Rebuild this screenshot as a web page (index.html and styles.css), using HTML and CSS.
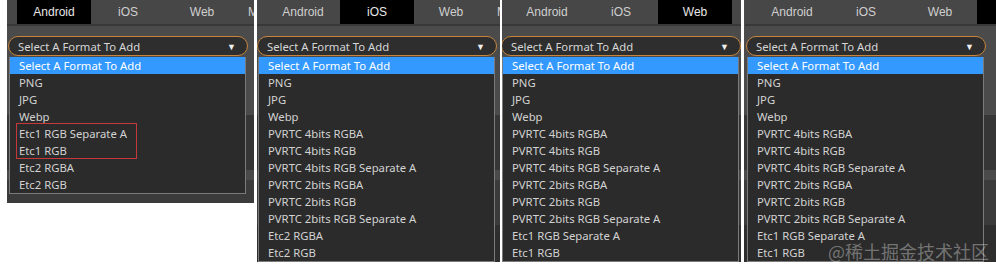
FILE: index.html
```html
<!DOCTYPE html>
<html lang="en">
<head>
    <meta charset="UTF-8">
    <title>Texture Formats</title>
    <link rel="stylesheet" href="styles.css">
</head>
<body>

    <div class="strip">

        <!-- Android -->
        <div class="panel p1">
            <div class="frame">
                <div class="tabs">
                    <span class="tab active">Android</span>
                    <span class="tab">iOS</span>
                    <span class="tab">Web</span>
                    <span class="tab more">M</span>
                </div>
                <div class="body">
                    <div class="select">Select A Format To Add<span class="arrow">▼</span></div>
                    <ul class="menu">
                        <li class="selected">Select A Format To Add</li>
                        <li>PNG</li>
                        <li>JPG</li>
                        <li>Webp</li>
                        <li>Etc1 RGB Separate A</li>
                        <li>Etc1 RGB</li>
                        <li>Etc2 RGBA</li>
                        <li>Etc2 RGB</li>
                    </ul>
                </div>
            </div>
            <div class="mark-box"></div>
        </div>

        <!-- iOS -->
        <div class="panel p2">
            <div class="frame">
                <div class="tabs">
                    <span class="tab">Android</span>
                    <span class="tab active">iOS</span>
                    <span class="tab">Web</span>
                    <span class="tab more">M</span>
                </div>
                <div class="body">
                    <div class="select">Select A Format To Add<span class="arrow">▼</span></div>
                    <ul class="menu">
                        <li class="selected">Select A Format To Add</li>
                        <li>PNG</li>
                        <li>JPG</li>
                        <li>Webp</li>
                        <li>PVRTC 4bits RGBA</li>
                        <li>PVRTC 4bits RGB</li>
                        <li>PVRTC 4bits RGB Separate A</li>
                        <li>PVRTC 2bits RGBA</li>
                        <li>PVRTC 2bits RGB</li>
                        <li>PVRTC 2bits RGB Separate A</li>
                        <li>Etc2 RGBA</li>
                        <li>Etc2 RGB</li>
                    </ul>
                </div>
            </div>
        </div>

        <!-- Web -->
        <div class="panel p3">
            <div class="frame">
                <div class="tabs">
                    <span class="tab">Android</span>
                    <span class="tab">iOS</span>
                    <span class="tab active">Web</span>
                    <span class="tab more">M</span>
                </div>
                <div class="body">
                    <div class="select">Select A Format To Add<span class="arrow">▼</span></div>
                    <ul class="menu">
                        <li class="selected">Select A Format To Add</li>
                        <li>PNG</li>
                        <li>JPG</li>
                        <li>Webp</li>
                        <li>PVRTC 4bits RGBA</li>
                        <li>PVRTC 4bits RGB</li>
                        <li>PVRTC 4bits RGB Separate A</li>
                        <li>PVRTC 2bits RGBA</li>
                        <li>PVRTC 2bits RGB</li>
                        <li>PVRTC 2bits RGB Separate A</li>
                        <li>Etc1 RGB Separate A</li>
                        <li>Etc1 RGB</li>
                    </ul>
                </div>
            </div>
        </div>

        <!-- Quarta aba -->
        <div class="panel p4">
            <div class="frame">
                <div class="tabs">
                    <span class="tab">Android</span>
                    <span class="tab">iOS</span>
                    <span class="tab">Web</span>
                    <span class="tab more active"></span>
                </div>
                <div class="body">
                    <div class="select">Select A Format To Add<span class="arrow">▼</span></div>
                    <ul class="menu">
                        <li class="selected">Select A Format To Add</li>
                        <li>PNG</li>
                        <li>JPG</li>
                        <li>Webp</li>
                        <li>PVRTC 4bits RGBA</li>
                        <li>PVRTC 4bits RGB</li>
                        <li>PVRTC 4bits RGB Separate A</li>
                        <li>PVRTC 2bits RGBA</li>
                        <li>PVRTC 2bits RGB</li>
                        <li>PVRTC 2bits RGB Separate A</li>
                        <li>Etc1 RGB Separate A</li>
                        <li>Etc1 RGB</li>
                    </ul>
                </div>
            </div>
            <div class="watermark">@稀土掘金技术社区</div>
        </div>

    </div>

</body>
</html>
```

FILE: styles.css
```css
* {
    box-sizing: border-box;
    margin: 0;
    padding: 0;
}

body {
    background-color: #fff;
    font-family: "Noto Sans", "Liberation Sans", sans-serif;
    overflow: hidden;
}

/* Faixa com as quatro capturas */
.strip {
    display: flex;
    align-items: flex-start;
    padding-left: 7px;
}

.panel {
    position: relative;
    overflow: hidden;
    background: linear-gradient(
        #4b4b4b 0, #4b4b4b 115px,
        #363636 115px, #363636 170px,
        #4a4a4a 170px, #4a4a4a 180px,
        #3b3b3b 180px, #3b3b3b 225px,
        #2e2e2e 225px
    );
}

.p1 { width: 247px; height: 203px; margin-right: 3px; }
.p2 { width: 243px; height: 262px; margin-right: 2px; }
.p3 { width: 239px; height: 262px; margin-right: 3px; }
.p4 { width: 252px; height: 262px; }

.p2 .frame { margin-left: -1px; }
.p3 .frame { margin-left: -2px; }
.p4 .frame { margin-left: 1px; }

/* Abas de plataforma */
.tabs {
    display: flex;
    height: 26px;
    padding-left: 10px;
    background-color: #474747;
    border-bottom: 2px solid #383838;
    white-space: nowrap;
}

.tab {
    flex: 0 0 74px;
    text-align: center;
    font-family: "Liberation Sans", Arial, sans-serif;
    font-size: 12px;
    line-height: 24px;
    color: #cfcfcf;
}

.tab.more {
    text-align: left;
    padding-left: 9px;
}

.tab.active {
    background-color: #000;
    color: #e6e6e6;
}

/* Seletor de formato */
.body {
    padding-top: 10px;
}

.select {
    display: flex;
    justify-content: space-between;
    align-items: center;
    width: 240px;
    height: 20px;
    margin-left: 1px;
    padding: 0 11px 0 9px;
    background-color: #2e2e2e;
    border: 1px solid #c7843d;
    border-radius: 10px;
    font-size: 11.3px;
    color: #d6d6d6;
    white-space: nowrap;
}

.arrow {
    font-size: 9px;
    color: #f0f0f0;
}

.menu {
    list-style: none;
    width: 237px;
    margin: 1px 0 0 2px;
    background-color: #2b2b2b;
    border: 1px solid #7a7a7a;
    border-top: none;
}

.menu li {
    height: 17px;
    line-height: 17px;
    padding-left: 9px;
    font-size: 11.3px;
    color: #d2d2d2;
    white-space: nowrap;
}

.menu li.selected {
    background-color: #3399ff;
    color: #fff;
}

/* Destaque em vermelho */
.mark-box {
    position: absolute;
    left: 9px;
    top: 123px;
    width: 121px;
    height: 36px;
    border: 1px solid #c5383b;
}

.watermark {
    position: absolute;
    left: 84px;
    top: 240px;
    font-family: "Noto Sans CJK SC", sans-serif;
    font-size: 18px;
    line-height: 22px;
    color: rgba(255, 255, 255, 0.35);
    white-space: nowrap;
}
```
